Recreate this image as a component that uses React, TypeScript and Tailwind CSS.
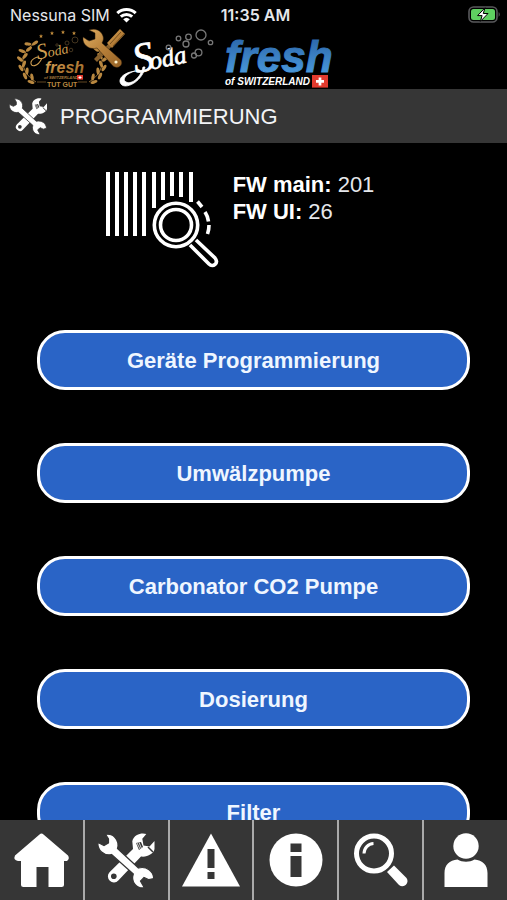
import type { ReactNode } from "react";

const menuItems = [
  "Geräte Programmierung",
  "Umwälzpumpe",
  "Carbonator CO2 Pumpe",
  "Dosierung",
  "Filter",
];

const firmware = [
  { label: "FW main:", value: "201" },
  { label: "FW UI:", value: "26" },
];

function WifiIcon() {
  return (
    <svg viewBox="0 0 21 16" className="h-4 w-[21px]" fill="none" stroke="#fff" strokeWidth="3" aria-hidden="true">
      <path d="M1.3 6.2a13.2 13.2 0 0 1 18.4 0" />
      <path d="M4.8 9.7a8.2 8.2 0 0 1 11.4 0" />
      <path d="M10.5 15.6 7.2 12.2a4.8 4.8 0 0 1 6.6 0z" fill="#fff" stroke="none" />
    </svg>
  );
}

function BatteryIcon() {
  return (
    <svg viewBox="0 0 33 18" className="h-[18px] w-[33px]" aria-hidden="true">
      <rect x="1" y="1" width="28" height="15" rx="4.5" fill="#000" stroke="#59595c" strokeWidth="1.6" />
      <rect x="3" y="3" width="24" height="11" rx="2.5" fill="#5fd061" />
      <path d="M30.6 6.3c1.5.5 1.5 3.9 0 4.4z" fill="#59595c" />
      <path d="M17 1.8 9.6 9.6h4.5L12.4 15.4 20 7.5h-4.7z" fill="#fff" stroke="#000" strokeWidth="1" />
    </svg>
  );
}

function SwissFlag({ x, y, size }: { x: number; y: number; size: number }) {
  return (
    <svg x={x} y={y} width={size} height={size * 0.8} viewBox="0 0 20 16">
      <rect width="20" height="16" fill="#e23a2e" />
      <path d="M8.3 3h3.4v3.3H15v3.4h-3.3V13H8.3V9.7H5V6.3h3.3z" fill="#fff" />
    </svg>
  );
}

const leaves = [
  { x: 35, y: 42, r: -35 },
  { x: 28, y: 43, r: 5 },
  { x: 29, y: 48, r: -40 },
  { x: 22, y: 50, r: 20 },
  { x: 25, y: 55, r: -50 },
  { x: 20, y: 58, r: 40 },
  { x: 24, y: 63, r: -70 },
  { x: 21, y: 67, r: 55 },
  { x: 27, y: 70, r: -85 },
  { x: 25, y: 75, r: 65 },
  { x: 32, y: 76, r: -100 },
  { x: 31, y: 81, r: 20 },
];

function Laurel() {
  return (
    <g fill="#b98840">
      {leaves.map((leaf) => (
        <ellipse
          key={`${leaf.x}-${leaf.y}`}
          cx={leaf.x}
          cy={leaf.y}
          rx="3.6"
          ry="1.6"
          transform={`rotate(${leaf.r} ${leaf.x} ${leaf.y})`}
        />
      ))}
      <path d="M34 43C20 51 18 70 36 81" fill="none" stroke="#b98840" strokeWidth="0.8" />
    </g>
  );
}

function BadgeLogo() {
  return (
    <svg viewBox="16 27 102 61" className="h-[61px] w-[102px] overflow-visible" role="img" aria-label="Soda fresh Tut Gut">
      <defs>
        <linearGradient id="gold" x1="0" y1="0" x2="1" y2="1">
          <stop offset="0" stopColor="#e0ae62" />
          <stop offset="0.5" stopColor="#b8813a" />
          <stop offset="1" stopColor="#966226" />
        </linearGradient>
      </defs>
      <Laurel />
      <g transform="translate(125 0) scale(-1 1)">
        <Laurel />
      </g>
      {[[41, 35], [52, 32], [63, 31], [74, 32]].map(([x, y]) => (
        <path
          key={x}
          d="M0-2 .6-.6 2-.5 .9.5 1.3 2 0 1.2-1.3 2-.9.5-2-.5-.6-.6z"
          transform={`translate(${x} ${y})`}
          fill="#c18c3c"
        />
      ))}
      <g fill="none" stroke="#5e4a2b" strokeWidth="0.7">
        <circle cx="75" cy="39" r="3" />
        <circle cx="67" cy="42" r="2" />
        <circle cx="71" cy="49" r="1.8" />
        <circle cx="57" cy="44" r="1.2" />
      </g>
      <g transform="rotate(-12 40 59)">
        <text x="38" y="58" fontStyle="italic" fontFamily="'Liberation Serif', serif" fill="#d2a052">
          <tspan fontSize="22">S</tspan>
          <tspan fontSize="14">oda</tspan>
        </text>
      </g>
      <path d="M42 57c-4 9-12 10-11 4 1-3 5-5 8-5" fill="none" stroke="#d2a052" strokeWidth="1.1" />
      <text x="45" y="72" fontSize="16" fontWeight="700" fontStyle="italic" fontFamily="'Liberation Sans', sans-serif" fill="url(#gold)">
        fresh
      </text>
      <text x="44" y="78" fontSize="4" fontWeight="700" fontStyle="italic" fontFamily="'Liberation Sans', sans-serif" fill="#a57b3d">
        of SWITZERLAND
      </text>
      <SwissFlag x={77} y={74} size={6} />
      <text x="47" y="86" fontSize="7" fontWeight="700" fontFamily="'Liberation Sans', sans-serif" fill="#b98840">
        TUT GUT
      </text>
      <path d="M37 81h9M78 81h9" stroke="#8a6430" strokeWidth="0.7" />
      {/* screwdriver handle behind the wrench */}
      <path d="m94 58 20-21 3 3-20 21z" fill="#87602c" />
      <path d="m107 42 13-14 5 5-13 14z" fill="url(#gold)" />
      <path d="m110 43 11-12M113 45l11-12" stroke="#75501f" strokeWidth="1" />
      {/* wrench */}
      <path
        d="M89 29c6-2 12 0 14 6 1 3 0 5-1 7l19 17c3 5-3 10-8 6L97 47c-7 2-13-2-14-8v-3l6 4 6-2 0-6z"
        fill="url(#gold)"
        stroke="#2b1b08"
        strokeWidth="0.5"
      />
      <circle cx="116" cy="61" r="1.6" fill="#fff4cf" />
    </svg>
  );
}

function SodaLogo() {
  return (
    <svg viewBox="118 27 98 61" className="h-[61px] w-[98px]" role="img" aria-label="Soda">
      <g transform="rotate(-12 136 70)">
        <text x="135" y="72" fontStyle="italic" fontFamily="'Liberation Serif', serif" fill="#fff" stroke="#fff" strokeWidth="0.7">
          <tspan fontSize="42">S</tspan>
          <tspan fontSize="25" dx="-5">oda</tspan>
        </text>
      </g>
      <path
        d="M145 66c-2 13-17 22-23 18-5-4-1-12 13-14-10 3-13 9-9 11 6 3 15-5 17-15z"
        fill="#fff"
        stroke="#fff"
        strokeWidth="0.8"
      />
      <g fill="none" stroke="#777" strokeWidth="1.3">
        <circle cx="201" cy="34" r="5" />
        <circle cx="188.500" cy="36" r="2.800" />
        <circle cx="178.500" cy="37.500" r="2.300" />
        <circle cx="186" cy="43" r="3" />
        <circle cx="168.500" cy="46.500" r="2.300" />
        <circle cx="210.500" cy="41.500" r="2.200" />
        <circle cx="198.500" cy="51.500" r="3.400" />
        <circle cx="194" cy="54.500" r="2.500" />
      </g>
    </svg>
  );
}

function FreshLogo() {
  return (
    <svg viewBox="216 27 124 61" className="h-[61px] w-[124px]" role="img" aria-label="fresh of Switzerland">
      <defs>
        <linearGradient id="blue" x1="0" y1="0" x2="0" y2="1">
          <stop offset="0.2" stopColor="#2f6cb0" />
          <stop offset="0.9" stopColor="#4b9bdd" />
        </linearGradient>
      </defs>
      <text
        x="225"
        y="71"
        fontSize="44"
        fontWeight="700"
        fontStyle="italic"
        fontFamily="'Liberation Sans', sans-serif"
        fill="url(#blue)"
        stroke="url(#blue)"
        strokeWidth="1"
      >
        fresh
      </text>
      <text x="225" y="84" fontSize="10" fontWeight="700" fontStyle="italic" fontFamily="'Liberation Sans', sans-serif" fill="#fff">
        of SWITZERLAND
      </text>
      <SwissFlag x={312} y={74} size={16} />
    </svg>
  );
}

function ToolsIcon({ className }: { className: string }) {
  return (
    <svg viewBox="0 0 60 60" className={className} aria-hidden="true">
      {/* adjustable wrench */}
      <path
        d="M50.300 4C46 2.500 38 4 36.300 11.300L37 19 13.500 42.300a6 6 0 0 0 8.800 8.200L45 26.500c6 1 13-3 13.500-7.500l0-8-5 5.500-6-1-1.200-6.700z"
        fill="#fff"
      />
      <circle cx="17.800" cy="46.300" r="2.800" fill="#363636" />
      <path d="m40 13 5-1 2 5-4 3z" fill="#363636" />
      <path d="m41 13 3 6M43 12.500l2.500 6" stroke="#fff" strokeWidth="0.8" />
      <path d="m52 17 5 5" stroke="#363636" strokeWidth="1.500" />
      {/* open-end wrench */}
      <path
        d="M9.700 4.500C17 3 24 10 21.500 18.500L42.500 38c8-2 15 3 15.200 10.500l-4.700 1.200-5-2.200-3.500 3.500 3.800 6.800C41 59 34.500 52 37.300 44L15.500 24.500C8 26.500 1 20 2 12.500l6 3 4.500-2.500 0-4z"
        fill="#fff"
        stroke="#363636"
        strokeWidth="1.200"
      />
    </svg>
  );
}

function BarcodeSearchIcon() {
  const bars = [
    [3, 65], [12, 65], [21, 65], [30, 65], [39, 65],
    [49, 37], [58, 29], [67, 25], [76, 26], [86, 31],
  ];

  return (
    <svg viewBox="0 0 114 98" className="h-[98px] w-[114px] shrink-0" fill="none" stroke="#fff" aria-hidden="true">
      {bars.map(([x, end]) => (
        <path key={x} d={`M${x} 1V${end}`} strokeWidth="4" />
      ))}
      <circle cx="71" cy="54" r="21.700" strokeWidth="3.600" />
      <circle cx="71" cy="54" r="15.500" strokeWidth="3.600" />
      <path d="m91 69 19 18c4 5-2 10-6 6L85 74" strokeWidth="3.600" />
      <path d="M92.500 30.500 97 36M100 41c2 3 3 6 3.500 9.500M104 54c0 3-.4 6-1.500 9" strokeWidth="3.600" />
    </svg>
  );
}

function HomeIcon() {
  return (
    <svg viewBox="0 0 60 60" className="size-15" fill="#fff" aria-hidden="true">
      <path d="M28.500 4.500q2-2 4 0L57 25.500q2 3-1 5.500h-3v23.500q0 2.500-2.500 2.500H37.500V37h-12v20H12.500Q10 57 10 54.500V31H7q-5-1-3-5.500z" />
    </svg>
  );
}

function WarningIcon() {
  return (
    <svg viewBox="0 0 60 60" className="size-15" aria-hidden="true">
      <path d="M30 3.500 59 56.500H1z" fill="#fff" />
      <path d="M26.500 19h7v19h-7zM26.500 42h7v7h-7z" fill="#363636" />
    </svg>
  );
}

function InfoIcon() {
  return (
    <svg viewBox="0 0 60 60" className="size-15" aria-hidden="true">
      <circle cx="30" cy="30" r="26.500" fill="#fff" />
      <path d="M24.500 13.500h11V22h-11zM24.500 26h11v21h-11z" fill="#363636" />
    </svg>
  );
}

function SearchIcon() {
  return (
    <svg viewBox="0 0 60 60" className="size-15" fill="none" stroke="#fff" aria-hidden="true">
      <circle cx="23" cy="23.500" r="17.500" strokeWidth="5" />
      <path d="M13 23.500a10 10 0 0 1 9.500-10" strokeWidth="3" />
      <path d="m36 42 7-6.500L55.500 48c3.500 5-3 11-7.500 7z" fill="#fff" stroke="none" />
    </svg>
  );
}

function UserIcon() {
  return (
    <svg viewBox="0 0 60 60" className="size-15" fill="#fff" aria-hidden="true">
      <circle cx="30" cy="16" r="12.700" />
      <path d="M8.500 57V43c0-8 5-13 13-13.500 5 3 12 3 17 0 8 .5 13 5.500 13 13.500v14z" />
    </svg>
  );
}

const navItems: { label: string; icon: ReactNode }[] = [
  { label: "Home", icon: <HomeIcon /> },
  { label: "Programmierung", icon: <ToolsIcon className="size-15" /> },
  { label: "Warnungen", icon: <WarningIcon /> },
  { label: "Info", icon: <InfoIcon /> },
  { label: "Suche", icon: <SearchIcon /> },
  { label: "Profil", icon: <UserIcon /> },
];

export default function App() {
  return (
    <div className="flex h-screen flex-col bg-black font-['Liberation_Sans',sans-serif] text-white">
      <header className="shrink-0">
        <div className="grid h-7 grid-cols-3 items-center pt-0.5 pr-1.5 pl-2.5 font-[Inter,sans-serif] text-base text-gray-200">
          <div className="flex items-center gap-1.5 whitespace-nowrap">
            <span>Nessuna SIM</span>
            <WifiIcon />
          </div>
          <span className="text-center font-semibold">11:35 AM</span>
          <div className="flex justify-end">
            <BatteryIcon />
          </div>
        </div>
        <div className="flex h-[61px] items-end pl-4">
          <BadgeLogo />
          <SodaLogo />
          <FreshLogo />
        </div>
      </header>

      <div className="flex h-[54px] shrink-0 items-center gap-3 bg-[#363636] px-2">
        <ToolsIcon className="size-10" />
        <h1 className="text-[22px] text-gray-100">PROGRAMMIERUNG</h1>
      </div>

      <main className="min-h-0 flex-1 overflow-y-auto [scrollbar-width:none]">
        <section className="flex justify-center gap-3.5 pt-7 pr-7">
          <BarcodeSearchIcon />
          <dl className="text-[22px] leading-[27px]">
            {firmware.map((item) => (
              <div key={item.label} className="flex gap-1.5">
                <dt className="font-bold">{item.label}</dt>
                <dd className="text-gray-200">{item.value}</dd>
              </div>
            ))}
          </dl>
        </section>

        <div className="flex flex-col gap-[53px] px-[37px] pt-[61px] pb-12">
          {menuItems.map((item) => (
            <button
              key={item}
              type="button"
              className="h-[60px] shrink-0 rounded-[28px] border-3 border-white bg-[#2a64c6] text-[22px] font-bold text-blue-50"
            >
              {item}
            </button>
          ))}
        </div>
      </main>

      <nav className="flex h-20 shrink-0 bg-[#363636]">
        {navItems.map((item) => (
          <button
            key={item.label}
            type="button"
            aria-label={item.label}
            className="flex flex-1 items-center justify-center border-r-2 border-[#aaaaaa] last:border-r-0"
          >
            {item.icon}
          </button>
        ))}
      </nav>
    </div>
  );
}
